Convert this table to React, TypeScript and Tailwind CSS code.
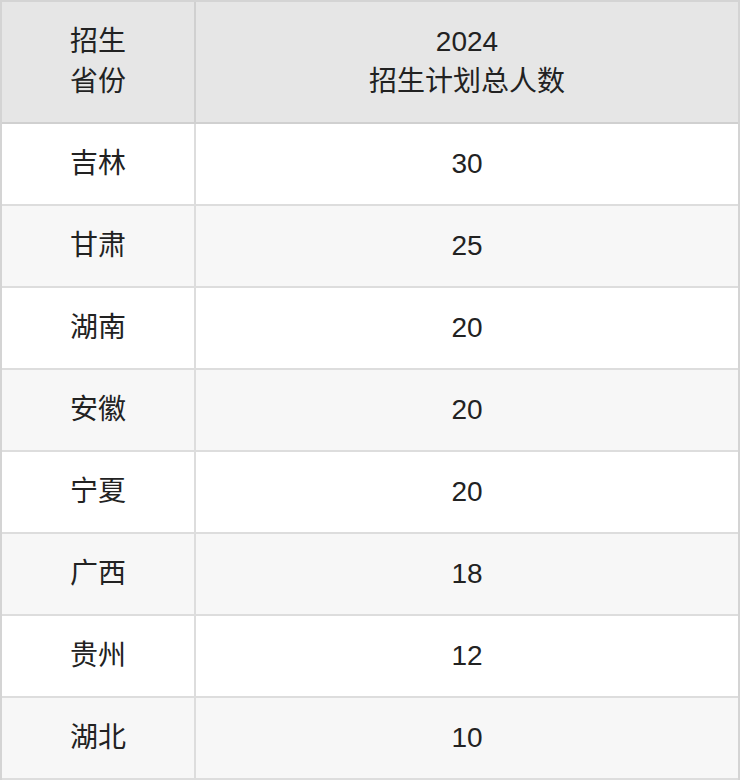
const ROWS = [
  { province: "吉林", count: 30 },
  { province: "甘肃", count: 25 },
  { province: "湖南", count: 20 },
  { province: "安徽", count: 20 },
  { province: "宁夏", count: 20 },
  { province: "广西", count: 18 },
  { province: "贵州", count: 12 },
  { province: "湖北", count: 10 },
];

export default function App() {
  return (
    <div
      className="w-[740px] bg-white text-[28px] leading-[40px] text-[#222222]"
      style={{ fontFamily: '"Liberation Sans", "Noto Sans CJK SC", sans-serif' }}
    >
      <div className="border-x-2 border-t-2 border-[#d4d4d4]">
        {/* header */}
        <div className="flex h-[122px] border-b-2 border-[#d0d0d0] bg-[#e6e6e6]">
          <div className="flex w-[194px] shrink-0 items-center justify-center border-r-2 border-[#d0d0d0] text-center">
            招生
            <br />
            省份
          </div>
          <div className="flex flex-1 items-center justify-center text-center">
            2024
            <br />
            招生计划总人数
          </div>
        </div>

        {ROWS.map((row, i) => (
          <div
            key={row.province}
            className={
              "flex h-[82px] border-b-2 border-[#dddddd] " +
              (i % 2 === 0 ? "bg-white" : "bg-[#f7f7f7]")
            }
          >
            <div className="flex w-[194px] shrink-0 items-center justify-center border-r-2 border-[#dddddd]">
              {row.province}
            </div>
            <div className="flex flex-1 items-center justify-center">{row.count}</div>
          </div>
        ))}
      </div>
    </div>
  );
}
